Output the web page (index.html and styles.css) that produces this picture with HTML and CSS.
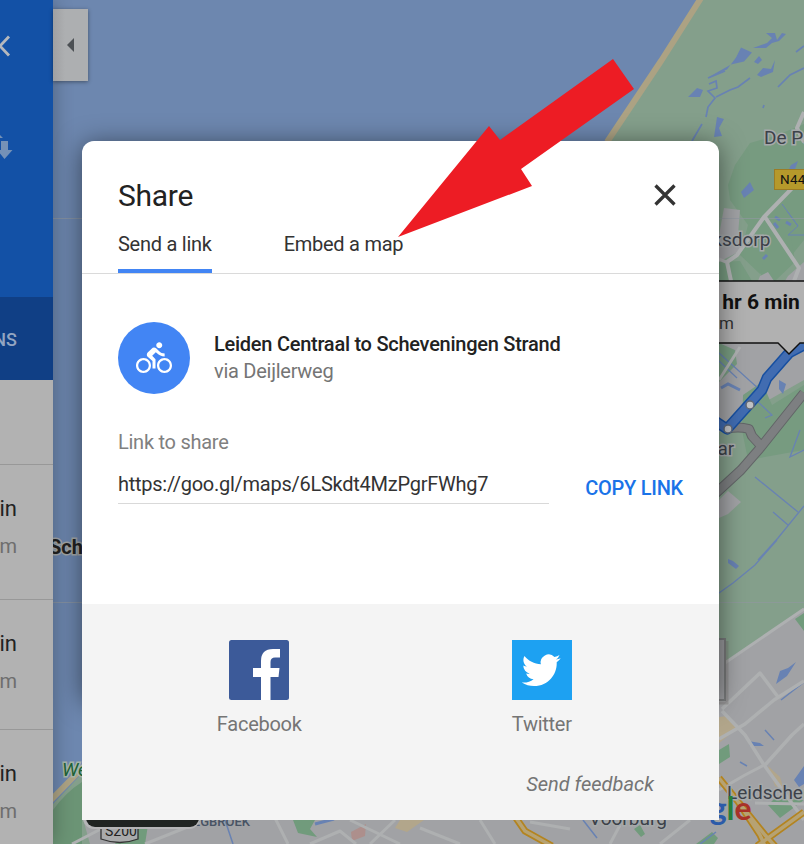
FILE: index.html
```html
<!DOCTYPE html>
<html lang="en">
<head>
<meta charset="utf-8">
<title>Share</title>
<link rel="stylesheet" href="styles.css">
</head>
<body>
<div class="app">
  <svg class="map" viewBox="0 0 804 844" aria-hidden="true">
    <rect width="804" height="844" fill="#6d87af"/>
    <!-- dunes and coast -->
    <path d="M700 0H804V844H53V804L90 765 607 141Z" fill="#849f8b"/>
    <path d="M701-2L661 61 607 142M50 801L100 750" fill="none" stroke="#aca283" stroke-width="6"/>
    <path d="M53 810Q66 792 82 782V844H53Z" fill="#6b9475"/>
    <!-- woodland -->
    <path d="M750 143L775 136 804 124V240L788 260 760 274 740 255 748 225 730 200 728 185 735 165Z" fill="#779b80"/>
    <path d="M719 262L740 261 752 281 719 281ZM770 220L790 230 795 262 775 281 760 281Z" fill="#779b80"/>
    <!-- built-up areas -->
    <g fill="#a1a2a5">
      <path d="M719 235L724 208 740 210 738 235 742 250 719 262Z"/>
      <path d="M719 343H804V380L760 405 719 432Z"/>
      <path d="M719 500L728 491 741 502 728 514 719 518Z"/>
      <path d="M719 667L804 608V844H719Z"/>
      <path d="M82 815H804V844H90Z"/>
      <path d="M788 276L804 262V281H785ZM760 276L768 272 774 281H758Z"/>
    </g>
    <path d="M719 343L735 350 737 364 719 382ZM743 395L762 382 772 405 804 385V450L748 460 742 430Z" fill="#779b80"/>
    <path d="M768 805L775 798 804 800 780 818ZM719 750L729 744 730 757 719 764ZM293 820H315L310 829 317 837 298 833ZM125 830L148 825 145 844H115ZM634 829L640 825 645 834 641 837ZM696 844L712 832 718 838 714 844Z" fill="#719b7c"/>
    <path d="M719 717L728 716 738 728 719 743ZM768 766L780 777 784 790 775 786ZM400 820H424L407 832 395 828Z" fill="#b2a68b"/>
    <path d="M351 832L366 824 365 836 352 841Z" fill="#ad8f8c"/>
    <path d="M795 619L804 613V631Z" fill="#719b7c"/>
    <!-- water -->
    <g fill="#6882b3">
      <path d="M708 78L727 70 736 58 741 48 752 53 744 62 731 65Z" transform="translate(0 -.5)"/>
      <path d="M753 48L767 43 772 38 766 33 775 33 777 40 782 33 786 34 779 41 772 43 766 48Z"/>
      <path d="M688 97L697 88 703 90 700 97ZM754 62L759 56 762 60 758 64ZM757 75L763 68 771 69 775 60 773 72 761 77ZM717 117L724 119 719 128 722 136 714 137Z"/>
      <path d="M741 192L750 182 754 190 744 198ZM791 165L798 161 795 169 789 169Z"/>
      <path d="M728 559L733 561 739 566 736 569 728 563Z"/>
      <path d="M779 380L786 384 783 394 779 389ZM780 671L788 668 796 662 787 676 776 684ZM748 741L760 743 764 746 750 746ZM794 780L804 766V784L799 787Z"/>
    </g>
    <g fill="none" stroke="#6882b3">
      <path d="M708 78L725 71M709 84L716 81 717 88 708 91 715 98 708 107 706 117M716 97L730 90 738 87 750 78M778 87L790 75 804 68M702 124L692 141M796 52L804 46M763 108L764 105" stroke-width="1.7"/>
      <path d="M787 211L798 226 788 235 804 235M782 204L798 226" stroke-width="1"/>
      <path d="M775 217L780 220M774 223L778 228M786 222L791 225M763 259L767 255" stroke-width="3"/>
      <path d="M719 593L733 583 755 565 777 540M758 560L778 538 804 506M755 477L798 512M773 512L788 525M804 450L790 457 800 430" stroke-width="1.3"/>
      <path d="M719 353L760 390M719 361L737 378M757 401L772 415 765 418" stroke-width="1.2"/>
      <path d="M721 388L728 384 740 390" stroke-width="3"/>
      <path d="M740 762L747 766M765 730L774 740M767 705L776 698M781 700L804 682M700 844L716 832M225 820L233 844M583 820L597 838" stroke-width="1.5"/>
      <path d="M315 824L334 819" stroke-width="3"/>
    </g>
    <!-- minor roads -->
    <g fill="none" stroke="#aeb0b1" stroke-linejoin="round">
      <path d="M53 218.500H804M53 602.500H804" stroke="#9098a0" stroke-width="1" opacity=".65"/>
      <path d="M804 112L797 128 804 142M804 176L764 217 737 255 727 262 731 281M765 217L799 268 794 281" stroke-width="4"/>
      <path d="M719 380L740 347M726 262L719 259" stroke-width="3"/>
      <path d="M719 739L745 724 774 700 804 681M722 709L760 673 778 697M722 711L745 735 764 765 804 820M765 765L792 735 804 724" stroke-width="3.500"/>
      <path d="M719 790L745 775 764 765M719 667L804 609" stroke-width="3"/>
      <path d="M72 844L122 818M145 844L205 820M275 818L288 844M310 844L340 831 356 844M350 820L400 844M420 828L460 844M370 844L395 820M480 820L495 844M530 822L570 829M610 844L620 825M660 844L690 820M755 803L804 804" stroke-width="3"/>
    </g>
    <!-- highways -->
    <path d="M516 818L525 831 552 846M719 778L765 835 775 846M737 800L760 835 765 846M757 846L804 812" fill="none" stroke="#b38420" stroke-width="7"/>
    <path d="M516 818L525 831 552 846M719 778L765 835 775 846M737 800L760 835 765 846M757 846L804 812" fill="none" stroke="#b6a273" stroke-width="3.500"/>
    <!-- route lines -->
    <g fill="none" stroke-linejoin="round">
      <path d="M804 393L761 447 741 470 715 494M727 429Q738 426 749 429L752 436 762 447" stroke="#626567" stroke-width="10"/>
      <path d="M804 393L761 447 741 470 715 494M727 429Q738 426 749 429L752 436 762 447" stroke="#7d7f81" stroke-width="8"/>
      <path d="M804 345L789 353 767 378 762 390 727 429 715 421" stroke="#174fa0" stroke-width="11"/>
      <path d="M804 345L789 353 767 378 762 390 727 429 715 421" stroke="#416cb1" stroke-width="8"/>
      <g fill="#c0c2c5" stroke="#606875" stroke-width="1.500"><circle cx="728" cy="429" r="4"/><circle cx="750" cy="405" r="4"/></g>
    </g>
    <path d="M700 281H806V343H800L789 354 778 343H700Z" fill="#b1b1b1" stroke="#111" stroke-width="1.400"/>
    <text class="duration" x="705" y="309">1 hr 6 min</text>
    <text class="distance" x="687" y="329">20 km</text>
    <rect x="774.500" y="169.500" width="36" height="20" fill="#b5992b" stroke="#9b7c25"/>
    <text class="road" x="780" y="184">N44</text>
    <g class="place">
      <text x="764" y="144">De Pan</text>
      <text x="675" y="246">Maaksdorp</text>
      <text x="640" y="455">Wassenaar</text>
      <text x="727" y="799">Leidschendam</text>
      <text x="589" y="825">Voorburg</text>
    </g>
    <text class="city" x="49" y="554">Scheveningen</text>
    <text class="park" x="62" y="776">Westduin</text>
    <text class="district" x="185" y="826">SEGBROEK</text>
    <path d="M101 828H138V839Q120 846 101 839Z" fill="#a9aaab" stroke="#333" stroke-width="1.300"/>
    <text class="shield" x="105" y="836">S200</text>
    <rect x="83" y="760" width="117" height="69" rx="11" fill="#b5b5b7"/>
    <rect x="86" y="760" width="113" height="67" rx="9" fill="#202422"/>
    <rect x="690" y="639" width="35" height="61" fill="#999a9d" stroke="#77797a" stroke-width="2"/>
    <path d="M727 641V703H719" fill="none" stroke="#706c6b" opacity=".35" stroke-width="3"/>
    <text class="brand" x="650" y="820"><tspan fill="#2c5ba9">G</tspan><tspan fill="#a83229">o</tspan><tspan fill="#b28c1c">o</tspan><tspan fill="#2c5ba9">g</tspan><tspan fill="#26803b">l</tspan><tspan fill="#a83229">e</tspan></text>
  </svg>

  <aside class="sidebar">
    <div class="search">
      <svg class="search-icons" viewBox="0 0 53 297" aria-hidden="true">
        <path d="M-9 36.500L9 55.500M9 36.500L-9 55.500" stroke="#b5b8bd" stroke-width="2.800"/>
        <path d="M1 141H8V150H12.500L4.500 159-3 150H1ZM0 135L3 138H0Z" fill="#7491b7"/>
      </svg>
    </div>
    <div class="options">OPTIONS</div>
    <div class="gap"></div>
    <div class="trip"><b>1 h 6 min</b><span>20.2 km</span></div>
    <div class="trip short"><b>1 h 9 min</b><span>21.0 km</span></div>
    <div class="trip short"><b>1 h 9 min</b><span>21.4 km</span></div>
  </aside>
  <div class="collapse"><i></i></div>

  <section class="dialog">
    <header class="head">
      <h1>Share</h1>
      <svg class="close" viewBox="0 0 22 22"><path d="M1.500 1.500L20.500 20.500M20.500 1.500L1.500 20.500" stroke="#333" stroke-width="3.300"/></svg>
    </header>
    <nav class="tabs">
      <span class="tab active">Send a link</span>
      <span class="tab">Embed a map</span>
    </nav>
    <main class="content">
      <div class="route">
        <div class="badge">
          <svg viewBox="0 0 24 24" fill="#fff"><path d="M15.500 5.500c1.100 0 2-.9 2-2s-.9-2-2-2-2 .9-2 2 .9 2 2 2zM5 12c-2.800 0-5 2.200-5 5s2.200 5 5 5 5-2.200 5-5-2.200-5-5-5zm0 8.500c-1.900 0-3.500-1.600-3.500-3.500s1.600-3.500 3.500-3.500 3.500 1.600 3.500 3.500-1.600 3.500-3.500 3.500zm5.800-10l2.400-2.400.8.8c1.300 1.300 3 2.100 5.100 2.100V9c-1.500 0-2.700-.6-3.600-1.500l-1.900-1.900c-.5-.4-1-.6-1.600-.6s-1.100.2-1.400.6L7.800 8.400c-.4.4-.6.9-.6 1.400 0 .6.2 1.100.6 1.400L11 14v5h2v-6.200l-2.200-2.300zM19 12c-2.800 0-5 2.200-5 5s2.200 5 5 5 5-2.200 5-5-2.200-5-5-5zm0 8.500c-1.900 0-3.500-1.600-3.500-3.500s1.600-3.500 3.500-3.500 3.500 1.600 3.500 3.500-1.600 3.500-3.500 3.500z"/></svg>
        </div>
        <div class="summary"><strong>Leiden Centraal to Scheveningen Strand</strong><span>via Deijlerweg</span></div>
      </div>
      <div class="label">Link to share</div>
      <div class="link-row">
        <div class="link">https://goo.gl/maps/6LSkdt4MzPgrFWhg7</div>
        <div class="copy">COPY LINK</div>
      </div>
    </main>
    <footer class="foot">
      <div class="networks">
        <div class="network">
          <svg viewBox="0 0 60 60"><rect width="60" height="60" rx="2.500" fill="#3c5a99"/><path d="M32 60V37H24V28H32V21Q32 9 44 9H51V17.500H46Q41.500 17.500 41.500 22V28H50.500L49.500 37H41.500V60Z" fill="#fff"/></svg>
          <span>Facebook</span>
        </div>
        <div class="network">
          <svg viewBox="0 0 60 60"><rect width="60" height="60" fill="#1da1f2"/><path transform="translate(9.800 10.800) scale(1.620)" fill="#fff" d="M23.953 4.570a10 10 0 01-2.825.775 4.958 4.958 0 002.163-2.723c-.951.555-2.005.959-3.127 1.184a4.920 4.920 0 00-8.384 4.482C7.690 8.095 4.067 6.130 1.640 3.162a4.822 4.822 0 00-.666 2.475c0 1.710.870 3.213 2.188 4.096a4.904 4.904 0 01-2.228-.616v.060a4.923 4.923 0 003.946 4.827 4.996 4.996 0 01-2.212.085 4.936 4.936 0 004.604 3.417 9.867 9.867 0 01-6.102 2.105c-.390 0-.779-.023-1.170-.067a13.995 13.995 0 007.557 2.209c9.053 0 13.998-7.496 13.998-13.985 0-.210 0-.420-.015-.630A9.935 9.935 0 0024 4.590z"/></svg>
          <span>Twitter</span>
        </div>
      </div>
      <div class="feedback">Send feedback</div>
    </footer>
  </section>

  <svg class="pointer" viewBox="0 0 236 178" aria-hidden="true"><path d="M215 0L236 30 123 110 134 127 0 178 91 67 102 81Z" fill="#ed1c24"/></svg>
</div>
</body>
</html>
```
FILE: styles.css
```css
* { box-sizing: border-box; }
body { margin: 0; font-family: Roboto, "Liberation Sans", sans-serif; }
.app { position: relative; width: 804px; height: 844px; overflow: hidden; }
.map { position: absolute; inset: 0; width: 804px; height: 844px; }

.map .place text { font-size: 19px; fill: #3c4149; stroke: #a5a9aa; stroke-width: 3px; paint-order: stroke; }
.map .duration { font-size: 21px; font-weight: 700; fill: #111; }
.map .distance { font-size: 17px; fill: #333; }
.map .road { font-size: 13.5px; fill: #111; letter-spacing: .3px; }
.map .city { font-size: 20px; font-weight: 700; fill: #222; stroke: #a5a9aa; stroke-width: 3px; paint-order: stroke; }
.map .park { font-size: 19px; font-style: italic; fill: #1e6236; stroke: #a5b5aa; stroke-width: 3px; paint-order: stroke; }
.map .district { font-size: 13px; font-weight: 500; fill: #485364; }
.map .shield { font-size: 14px; fill: #222; }
.map .brand { font-family: Lato, sans-serif; font-size: 32px; font-weight: 700; }

.sidebar { position: relative; width: 53px; height: 844px; display: flex; flex-direction: column; background: #b2b2b2; overflow: hidden; box-shadow: 0 0 20px rgba(0, 0, 0, .3); }
.search { height: 297px; flex: none; background: #1351a6; }
.search-icons { display: block; width: 53px; height: 297px; }
.options { height: 83px; flex: none; display: flex; align-items: center; justify-content: flex-end; padding: 2px 36px 0 0; background: #103f85; color: #93a5c1; font-size: 18px; font-weight: 500; }
.gap { height: 84px; flex: none; }
.trip { height: 135px; flex: none; padding: 31px 36px 0 0; border-top: 1px solid #989898; display: flex; flex-direction: column; align-items: flex-end; white-space: nowrap; }
.trip.short { height: 130px; }
.trip b { font-size: 22px; line-height: 26px; font-weight: 400; color: #222; }
.trip span { margin-top: 12px; font-size: 20px; line-height: 24px; color: #6e6e6e; }

.collapse { position: absolute; left: 53px; top: 9px; width: 35px; height: 72px; background: linear-gradient(90deg, #9fa0a2, #adafb1 12px); display: flex; align-items: center; justify-content: center; box-shadow: 0 1px 4px rgba(0, 0, 0, .4); }
.collapse i { border: 7px solid transparent; border-left: 0; border-right: 7px solid #4c5054; }

.dialog { position: absolute; left: 82px; top: 141px; width: 637px; height: 679px; display: flex; flex-direction: column; z-index: 1; letter-spacing: -.26px; }
.dialog::before { content: ""; position: absolute; left: 0; top: 0; width: 637px; height: 560px; border-radius: 12px; box-shadow: 0 3px 26px rgba(0, 0, 0, .5); z-index: -1; }
.head { height: 84px; padding: 35px 43px 0 36px; display: flex; justify-content: space-between; background: #fff; border-radius: 12px 12px 0 0; }
.head h1 { margin: 0; font-size: 30px; line-height: 40px; font-weight: 400; color: #222; }
.close { width: 22px; height: 22px; margin-top: 8px; }
.tabs { height: 49px; padding-left: 36px; display: flex; gap: 72px; background: #fff; border-bottom: 1px solid #dadada; }
.tab { height: 48px; padding-top: 7px; font-size: 20px; line-height: 24px; color: #333; white-space: nowrap; }
.tab.active { border-bottom: 4px solid #4285f4; }
.content { height: 330px; padding: 48px 36px 0; background: #fff; }
.route { display: flex; gap: 24px; }
.badge { width: 72px; height: 72px; border-radius: 50%; background: #4285f4; display: flex; align-items: center; justify-content: center; }
.badge svg { width: 36px; height: 36px; }
.summary { padding-top: 9px; display: flex; flex-direction: column; font-size: 20px; line-height: 27px; white-space: nowrap; color: #757575; }
.summary strong { font-weight: 500; color: #222; }
.label { margin-top: 36px; font-size: 20px; line-height: 24px; color: #808080; }
.link-row { margin-top: 15px; display: flex; gap: 36px; }
.link { width: 432px; height: 35px; border-bottom: 1px solid #d9d9d9; font-size: 20px; line-height: 30px; color: #333; white-space: nowrap; }
.copy { padding-top: 7px; font-size: 20px; line-height: 24px; font-weight: 500; color: #1a73e8; white-space: nowrap; }
.foot { height: 216px; padding: 36px 36px 0; background: #f4f4f4; color: #757575; font-size: 20px; }
.networks { display: flex; }
.network { flex: 1; display: flex; flex-direction: column; align-items: center; gap: 12px; line-height: 24px; }
.network svg { width: 60px; height: 60px; }
.feedback { margin: 36px 29px 0 0; text-align: right; line-height: 24px; font-style: italic; letter-spacing: 0; }

.pointer { position: absolute; z-index: 2; left: 398px; top: 59px; width: 236px; height: 178px; }
```
